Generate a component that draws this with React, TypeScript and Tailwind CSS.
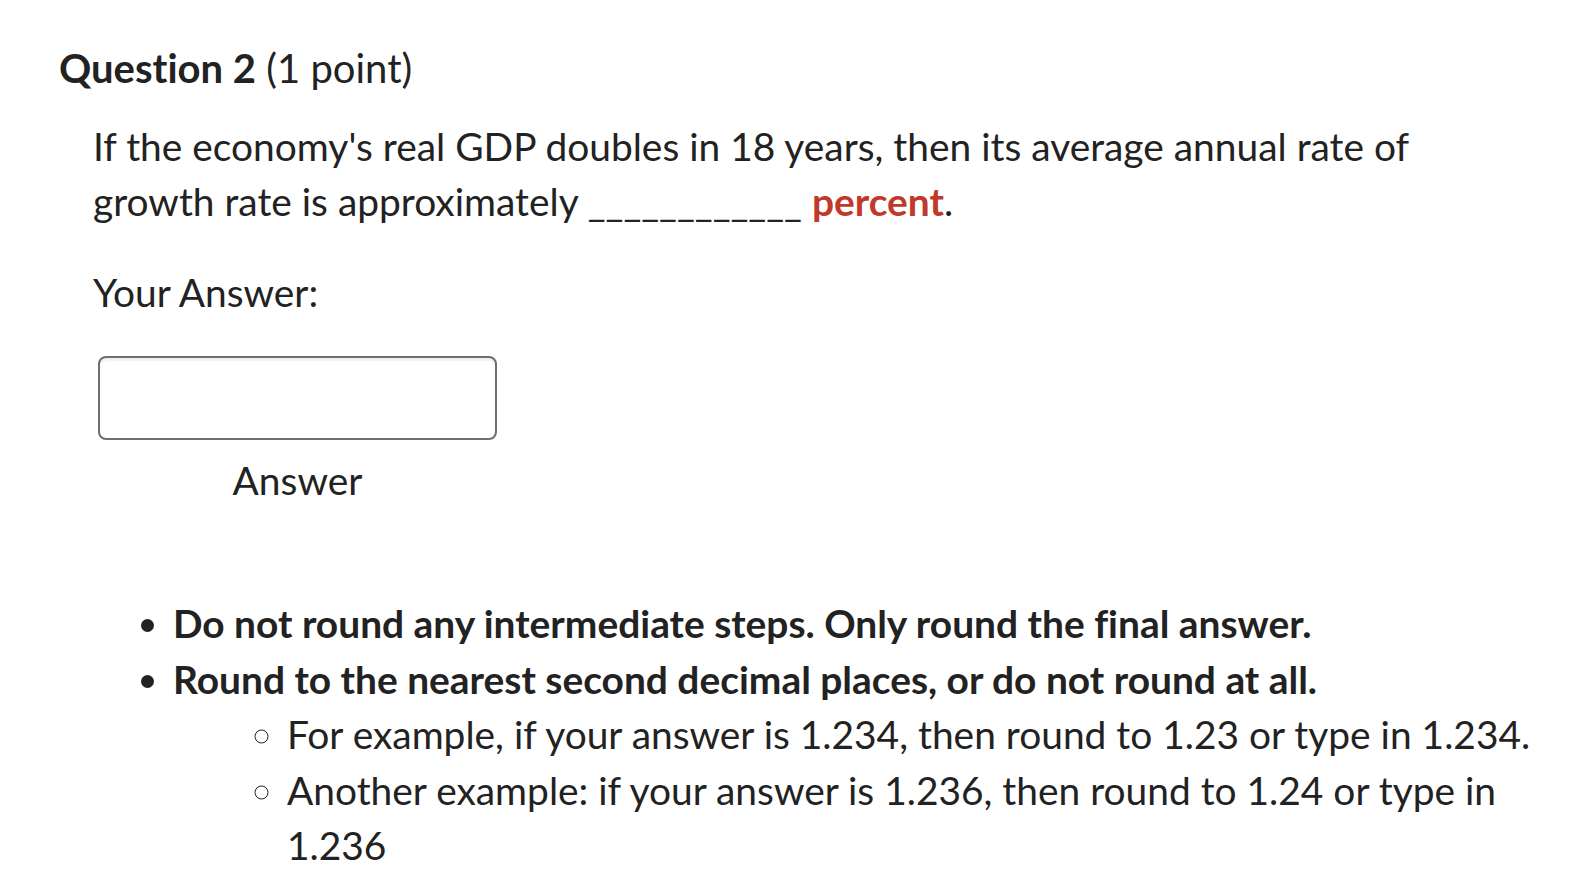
export default function App() {
  return (
    <div
      className="min-h-screen w-full bg-white text-[#222222] [font-variant-ligatures:none]"
      style={{ fontFamily: 'Lato, "Noto Sans", sans-serif' }}
    >
      <div className="pl-[59px] pr-[52px] pt-[41px] text-[38.9px] leading-[55.6px]">
        <h2 className="m-0 text-[40px]">
          <span className="font-bold">Question 2</span> (1 point)
        </h2>
        <div className="pl-[34px]">
          <p className="mt-[22px]">
            If the economy's real GDP doubles in 18 years, then its average annual rate of growth rate is
            approximately ____________ <span className="font-bold text-[#c0392b]">percent</span>.
          </p>
          <p className="mt-[35px]">Your Answer:</p>
          <div className="mt-[36px] ml-[5px] w-[399px]">
            <div className="h-[84px] w-full rounded-[8px] border-2 border-[#6b6f73] bg-white shadow-[inset_0_3px_2px_rgba(0,0,0,0.06)]" />
            <div className="mt-[13px] text-center">Answer</div>
          </div>
          <ul className="mt-[87px] list-disc pl-[80px] font-bold">
            <li>Do not round any intermediate steps. Only round the final answer.</li>
            <li>
              Round to the nearest second decimal places, or do not round at all.
              <ul className="list-[circle] pl-[114px] font-normal">
                <li>For example, if your answer is 1.234, then round to 1.23 or type in 1.234.</li>
                <li>Another example: if your answer is 1.236, then round to 1.24 or type in 1.236</li>
              </ul>
            </li>
          </ul>
        </div>
      </div>
    </div>
  );
}
